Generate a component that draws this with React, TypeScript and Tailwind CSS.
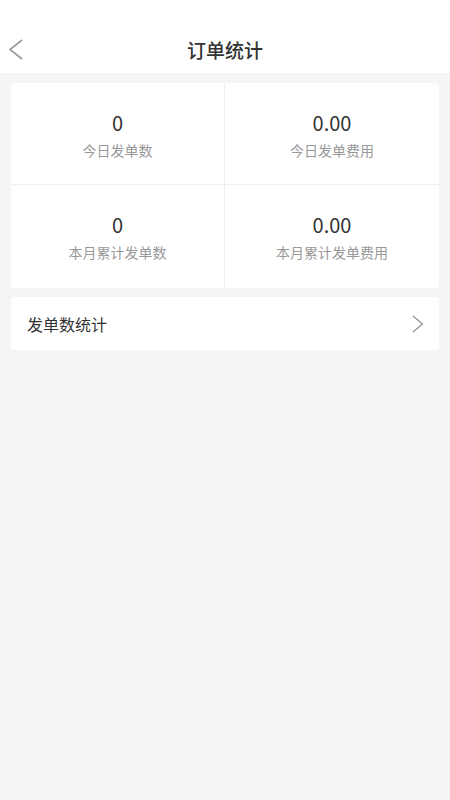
const stats = [
    { value: "0", label: "今日发单数" },
    { value: "0.00", label: "今日发单费用" },
    { value: "0", label: "本月累计发单数" },
    { value: "0.00", label: "本月累计发单费用" },
];

const StatCell = ({ value, label, index }: { value: string; label: string; index: number }) => (
    <div
        className={
            "flex flex-col items-center pt-[28px] " +
            (index % 2 === 0 ? "border-r border-[#f0f0f0] " : "") +
            (index < 2 ? "h-[102px] border-b border-[#f0f0f0]" : "h-[103px]")
        }
    >
        <span className="text-[20px] leading-[24px] text-[#333]">{value}</span>
        <span className="mt-[5px] text-[14px] leading-[20px] text-[#999]">{label}</span>
    </div>
);

export default function App() {
    return (
        <div
            className="w-[450px] h-[800px] bg-[#f5f5f5] flex flex-col"
            style={{ fontFamily: '"Noto Sans CJK SC", "Noto Sans", sans-serif' }}
        >
            <div className="bg-white pt-[27px]">
                <div className="relative h-[46px] flex items-center justify-center">
                    {/* back arrow */}
                    <svg className="absolute left-[8px] top-[11px]" width="16" height="22" viewBox="0 0 16 22">
                        <polyline points="14,2 2,11.5 14,21" fill="none" stroke="#999" strokeWidth="1.6" />
                    </svg>
                    <h1 className="text-[19px] font-medium text-[#333]">订单统计</h1>
                </div>
            </div>

            <div className="px-[11px] pt-[10px] flex flex-col gap-[9px]">
                <div className="bg-white rounded-[4px] grid grid-cols-2">
                    {stats.map((s, i) => (
                        <StatCell key={i} index={i} value={s.value} label={s.label} />
                    ))}
                </div>

                <div className="bg-white rounded-[4px] h-[53px] flex items-center justify-between pl-[16px] pr-[15px]">
                    <span className="text-[16px] text-[#333]">发单数统计</span>
                    <svg width="12" height="18" viewBox="0 0 12 18">
                        <polyline points="1,1 10.5,9 1,17" fill="none" stroke="#999" strokeWidth="1.4" />
                    </svg>
                </div>
            </div>
        </div>
    );
}
